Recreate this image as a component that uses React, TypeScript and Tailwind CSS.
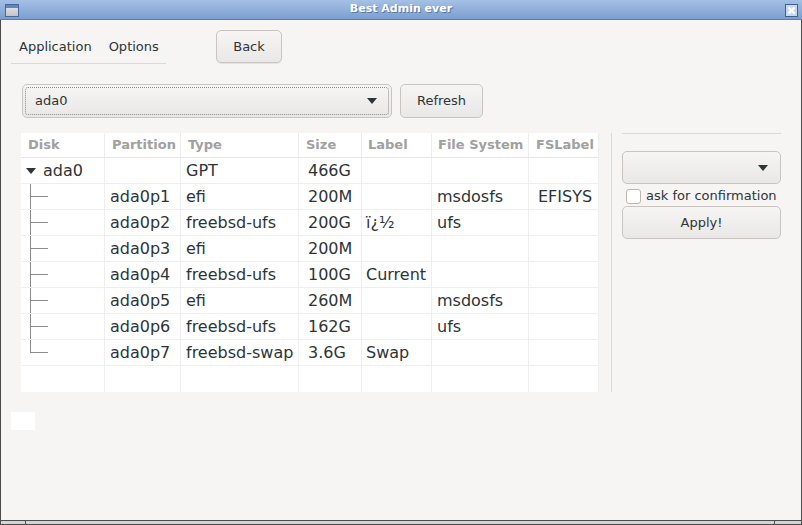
import React from 'react'

const FONT = { fontFamily: '"DejaVu Sans", "Liberation Sans", sans-serif' }

interface Row {
  disk: string
  partition: string
  type: string
  size: string
  label: string
  fs: string
  fslabel: string
}

const rows: Row[] = [
  { disk: 'ada0', partition: '', type: 'GPT', size: '466G', label: '', fs: '', fslabel: '' },
  { disk: '', partition: 'ada0p1', type: 'efi', size: '200M', label: '', fs: 'msdosfs', fslabel: 'EFISYS' },
  { disk: '', partition: 'ada0p2', type: 'freebsd-ufs', size: '200G', label: 'ï¿½', fs: 'ufs', fslabel: '' },
  { disk: '', partition: 'ada0p3', type: 'efi', size: '200M', label: '', fs: '', fslabel: '' },
  { disk: '', partition: 'ada0p4', type: 'freebsd-ufs', size: '100G', label: 'Current', fs: '', fslabel: '' },
  { disk: '', partition: 'ada0p5', type: 'efi', size: '260M', label: '', fs: 'msdosfs', fslabel: '' },
  { disk: '', partition: 'ada0p6', type: 'freebsd-ufs', size: '162G', label: '', fs: 'ufs', fslabel: '' },
  { disk: '', partition: 'ada0p7', type: 'freebsd-swap', size: '3.6G', label: 'Swap', fs: '', fslabel: '' },
]

const GRID = 'grid grid-cols-[84px_76px_118px_63px_70px_97px_70px]'

function Arrow() {
  return (
    <svg width="10" height="6" viewBox="0 0 10 6">
      <path d="M0 0 L10 0 L5 6 Z" fill="#2e3436" />
    </svg>
  )
}

function TreeLines({ last }: { last: boolean }) {
  return (
    <>
      <span className={`absolute left-[9px] top-0 w-px bg-[#8b8b8b] ${last ? 'h-[13px]' : 'h-full'}`} />
      <span className="absolute left-[9px] top-[12px] h-px w-[18px] bg-[#8b8b8b]" />
    </>
  )
}

export default function App() {
  return (
    <div className="flex h-[525px] w-[802px] flex-col bg-[#4c4c4c] text-[#2e3436]" style={FONT}>
      {/* title bar */}
      <div className="relative flex h-[20px] items-center justify-center border-b border-[#5d7caa] bg-gradient-to-b from-[#a4c1e4] to-[#7c9dd0]">
        <div className="absolute left-[5px] top-[4px] h-[13px] w-[14px] border border-[#47689b] bg-gradient-to-b from-[#e8e8e8] to-[#c4c4c4]">
          <div className="h-[3px] bg-[#5f86c2]" />
        </div>
        <span className="text-[11px] font-bold text-white [text-shadow:1px_1px_0_#5a78a6]">Best Admin ever</span>
        <div className="absolute right-[4px] top-[4px] flex h-[13px] w-[13px] items-center justify-center border border-[#3f5f91] bg-[#c9daf0]">
          <svg width="7" height="7" viewBox="0 0 7 7">
            <path d="M0.5 0.5 L6.5 6.5 M6.5 0.5 L0.5 6.5" stroke="#ffffff" strokeWidth="2" />
          </svg>
        </div>
      </div>

      {/* body */}
      <div className="mx-px flex flex-1 flex-col bg-[#f6f5f4] text-[13px]">
        <div className="flex items-start pt-[10px]">
          <div className="ml-[10px] flex h-[34px] w-[155px] items-center border-b border-[#dcd8d4] pl-[8px]">
            <span>Application</span>
            <span className="ml-[17px]">Options</span>
          </div>
          <button className="ml-[50px] h-[33px] w-[66px] rounded-[5px] border border-[#c9c4bf] bg-gradient-to-b from-[#f6f5f4] to-[#eae8e6] shadow-[0_1px_0_rgba(0,0,0,0.07)]">
            Back
          </button>
        </div>

        <div className="mt-[20px] flex">
          <div className="ml-[21px] flex h-[34px] w-[370px] items-center rounded-[5px] border border-[#c9c4bf] bg-gradient-to-b from-[#f6f5f4] to-[#eae8e6] p-[2px]">
            <div className="flex h-full w-full items-center justify-between rounded-[3px] border border-dotted border-[#8f8a85] pl-[9px] pr-[11px]">
              <span>ada0</span>
              <Arrow />
            </div>
          </div>
          <button className="ml-[8px] h-[34px] w-[83px] rounded-[5px] border border-[#c9c4bf] bg-gradient-to-b from-[#f6f5f4] to-[#eae8e6]">
            Refresh
          </button>
        </div>

        <div className="mt-[15px] flex items-start">
          {/* table */}
          <div className="ml-[20px] w-[578px] bg-white">
            <div className={`${GRID} h-[25px] items-center border-b border-[#e6e6e6] text-[13px] font-bold text-[#a0a0a0]`}>
              <div className="flex h-full items-center border-r border-[#ededed] pl-[7px]">Disk</div>
              <div className="flex h-full items-center border-r border-[#ededed] pl-[7px]">Partition</div>
              <div className="flex h-full items-center border-r border-[#ededed] pl-[7px]">Type</div>
              <div className="flex h-full items-center border-r border-[#ededed] pl-[7px]">Size</div>
              <div className="flex h-full items-center border-r border-[#ededed] pl-[6px]">Label</div>
              <div className="flex h-full items-center border-r border-[#ededed] pl-[6px]">File System</div>
              <div className="flex h-full items-center border-r border-[#ededed] pl-[7px]">FSLabel</div>
            </div>
            {rows.map((r, i) => (
              <div key={i} className={`${GRID} h-[26px] border-b border-[#efefef] text-[16px]`}>
                <div className="relative flex items-center border-r border-[#efefef]">
                  {i === 0 ? (
                    <div className="flex items-center pl-[5px]">
                      <Arrow />
                      <span className="ml-[7px]">{r.disk}</span>
                    </div>
                  ) : (
                    <TreeLines last={i === rows.length - 1} />
                  )}
                </div>
                <div className="flex items-center border-r border-[#efefef] pl-[5px]">{r.partition}</div>
                <div className="flex items-center border-r border-[#efefef] pl-[5px]">{r.type}</div>
                <div className="flex items-center border-r border-[#efefef] pl-[9px]">{r.size}</div>
                <div className="flex items-center border-r border-[#efefef] pl-[4px]">{r.label}</div>
                <div className="flex items-center border-r border-[#efefef] pl-[5px]">{r.fs}</div>
                <div className="flex items-center border-r border-[#efefef] pl-[9px]">{r.fslabel}</div>
              </div>
            ))}
            <div className={`${GRID} h-[26px]`}>
              {Array.from({ length: 7 }).map((_, i) => (
                <div key={i} className="border-r border-[#efefef]" />
              ))}
            </div>
          </div>

          {/* separator */}
          <div className="ml-[12px] h-[259px] w-px bg-[#dcd8d4]" />

          {/* right panel */}
          <div className="ml-[10px] flex w-[159px] flex-col">
            <div className="h-px bg-[#dcd8d4]" />
            <div className="mt-[17px] flex h-[33px] items-center justify-end rounded-[5px] border border-[#c9c4bf] bg-gradient-to-b from-[#f6f5f4] to-[#eae8e6] pr-[12px]">
              <Arrow />
            </div>
            <div className="mt-[3px] flex h-[18px] items-center">
              <span className="ml-[4px] h-[15px] w-[15px] rounded-[3px] border border-[#bdb7b1] bg-white" />
              <span className="ml-[5px]">ask for confirmation</span>
            </div>
            <button className="mt-[1px] h-[33px] rounded-[5px] border border-[#c9c4bf] bg-gradient-to-b from-[#f6f5f4] to-[#eae8e6]">
              Apply!
            </button>
          </div>
        </div>

        <div className="ml-[10px] mt-[20px] h-[18px] w-[24px] bg-white" />
      </div>

      {/* bottom frame */}
      <div className="flex h-[5px] border-t border-[#4c4c4c] bg-[#4c4c4c]">
        <div className="mx-px flex flex-1 border-b border-[#4c4c4c]">
          <div className="w-[25px] border-r border-[#4c4c4c] bg-[#d4d4d4]" />
          <div className="flex-1 border-r border-[#4c4c4c] bg-[#d4d4d4]" />
          <div className="w-[26px] bg-[#d4d4d4]" />
        </div>
      </div>
    </div>
  )
}
